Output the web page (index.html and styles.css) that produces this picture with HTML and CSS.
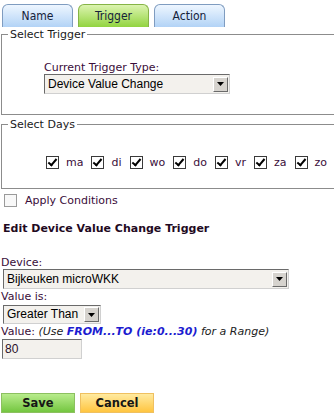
FILE: index.html
```html
<!DOCTYPE html>
<html lang="en">
<head>
    <meta charset="UTF-8">
    <title>Edit Trigger</title>
    <link rel="stylesheet" href="styles.css">
</head>
<body>
    <div class="tabs">
        <span class="tab">Name</span>
        <span class="tab active">Trigger</span>
        <span class="tab">Action</span>
    </div>

    <fieldset class="box box-trigger">
        <legend>Select Trigger</legend>
        <div class="trigger-type">
            <div class="field-label">Current Trigger Type:</div>
            <div class="dropdown dd-type">
                <span class="dropdown-value">Device Value Change</span>
                <span class="dropdown-btn"><svg width="7" height="4" viewBox="0 0 7 4"><path d="M0 0H7L3.5 4Z" fill="#000"/></svg></span>
            </div>
        </div>
    </fieldset>

    <fieldset class="box box-days">
        <legend>Select Days</legend>
        <div class="days">
            <label class="day"><span class="check on"></span>ma</label>
            <label class="day"><span class="check on"></span>di</label>
            <label class="day"><span class="check on"></span>wo</label>
            <label class="day"><span class="check on"></span>do</label>
            <label class="day"><span class="check on"></span>vr</label>
            <label class="day"><span class="check on"></span>za</label>
            <label class="day"><span class="check on"></span>zo</label>
        </div>
    </fieldset>

    <label class="conditions"><span class="check off"></span>Apply Conditions</label>

    <h3 class="edit-title">Edit Device Value Change Trigger</h3>

    <div class="field-label lbl-device">Device:</div>
    <div class="dropdown dd-device">
        <span class="dropdown-value">Bijkeuken microWKK</span>
        <span class="dropdown-btn"><svg width="7" height="4" viewBox="0 0 7 4"><path d="M0 0H7L3.5 4Z" fill="#000"/></svg></span>
    </div>

    <div class="field-label">Value is:</div>
    <div class="dropdown dd-op">
        <span class="dropdown-value">Greater Than</span>
        <span class="dropdown-btn"><svg width="7" height="4" viewBox="0 0 7 4"><path d="M0 0H7L3.5 4Z" fill="#000"/></svg></span>
    </div>

    <div class="field-label lbl-value">Value: <span class="hint">(Use <b class="range">FROM...TO (ie:0...30)</b> for a Range)</span></div>
    <div class="text-input">80</div>

    <div class="buttons">
        <button class="btn btn-save">Save</button>
        <button class="btn btn-cancel">Cancel</button>
    </div>
</body>
</html>
```

FILE: styles.css
```css
html, body {
    overflow: hidden;
}
body {
    margin: 0;
    padding: 0 0 0 1px;
    background: #fff;
    font-family: 'DejaVu Sans', Verdana, sans-serif;
    font-size: 11px;
    line-height: 13px;
    color: #2a0f2a;
    width: 333px;
    height: 417px;
}
.tabs {
    display: flex;
    gap: 5px;
    padding: 4px 0 0 1px;
    height: 23px;
}
.tab {
    width: 69px;
    height: 22px;
    border: 1px solid #7f9cc0;
    border-bottom: none;
    border-radius: 6px 6px 0 0;
    background: linear-gradient(#eef6ff, #b2d3f6);
    font-family: 'DejaVu Sans Condensed', 'DejaVu Sans', sans-serif;
    font-size: 12px;
    color: #15223a;
    display: flex;
    align-items: center;
    justify-content: center;
}
.tab.active {
    border-color: #86b446;
    background: linear-gradient(#dcf4b0, #92d440);
}
.box {
    margin: 1px 0 0 0;
    width: 345px;
    border: 1px solid #8c8c8c;
    padding: 0 0 0 6px;
    box-sizing: border-box;
}
.box legend {
    padding: 0 2px;
    line-height: 13px;
    color: #1a1a1a;
}
.box-trigger {
    height: 87px;
}
.trigger-type {
    padding: 20px 0 0 36px;
}
.box-days {
    margin-top: 3px;
    height: 71px;
}
.days {
    display: flex;
    padding: 25px 0 0 38px;
}
.day {
    display: flex;
    align-items: center;
    margin-right: 8px;
    color: #3a0d3a;
}
.check {
    width: 11px;
    height: 11px;
    border: 1px solid #3a3a3a;
    background: #fff;
    margin-right: 7px;
    display: inline-block;
    position: relative;
    flex: none;
}
.check.on::after {
    content: "";
    position: absolute;
    left: 3px;
    top: 0px;
    width: 3px;
    height: 7px;
    border: solid #000;
    border-width: 0 2px 2px 0;
    transform: rotate(40deg);
}
.check.off {
    border-color: #9a9a9a;
    background: #f8f8f8;
}
.conditions {
    display: flex;
    align-items: center;
    padding: 5px 0 0 3px;
    color: #3a0d3a;
}
.conditions .check {
    margin-right: 8px;
}
.edit-title {
    font-size: 11px;
    line-height: 13px;
    font-weight: bold;
    margin: 15px 0 0 2px;
    color: #1f0a1f;
}
.field-label {
    color: #3a0d3a;
}
.lbl-device {
    margin-top: 21px;
}
.lbl-value {
    margin-top: 1px;
}
.dropdown {
    display: flex;
    align-items: center;
    height: 20px;
    box-sizing: border-box;
    border: 1px solid #6a6a6a;
    border-right-color: #d0d0d0;
    border-bottom-color: #d0d0d0;
    background: #f3f1ed;
    font-family: 'Liberation Sans', Arial, sans-serif;
    font-size: 12px;
    color: #000;
    margin-left: 2px;
}
.dropdown-value {
    flex: 1;
    padding-left: 3px;
    white-space: nowrap;
}
.dropdown-btn {
    width: 15px;
    height: 15px;
    margin-right: 1px;
    background: #d6d3ce;
    border: 1px solid;
    border-color: #fff #6a6a6a #6a6a6a #fff;
    box-sizing: border-box;
    display: flex;
    align-items: center;
    justify-content: center;
}
.dd-type {
    width: 186px;
    margin-left: 0;
}
.dd-device {
    width: 286px;
    margin: 0 0 1px 2px;
}
.dd-op {
    width: 98px;
    height: 19px;
    margin: 2px 0 0 2px;
}
.hint {
    font-style: italic;
    color: #222;
}
.range {
    color: #1c1cd0;
}
.text-input {
    width: 80px;
    height: 20px;
    box-sizing: border-box;
    border: 1px solid #6a6a6a;
    border-right-color: #d0d0d0;
    border-bottom-color: #d0d0d0;
    background: #f3f1ed;
    font-family: 'Liberation Sans', Arial, sans-serif;
    font-size: 12px;
    line-height: 18px;
    padding-left: 2px;
    margin: 1px 0 0 1px;
}
.buttons {
    display: flex;
    gap: 5px;
    margin-top: 34px;
}
.btn {
    width: 74px;
    height: 20px;
    font-family: 'DejaVu Sans', Verdana, sans-serif;
    font-size: 11.5px;
    font-weight: bold;
    color: #161616;
    padding: 0;
    cursor: pointer;
}
.btn-save {
    border: 1px solid #8cc060;
    background: linear-gradient(#b8ec8c, #74c640);
}
.btn-cancel {
    border: 1px solid #efc060;
    background: linear-gradient(#ffeaa0, #ffc540);
}
```
